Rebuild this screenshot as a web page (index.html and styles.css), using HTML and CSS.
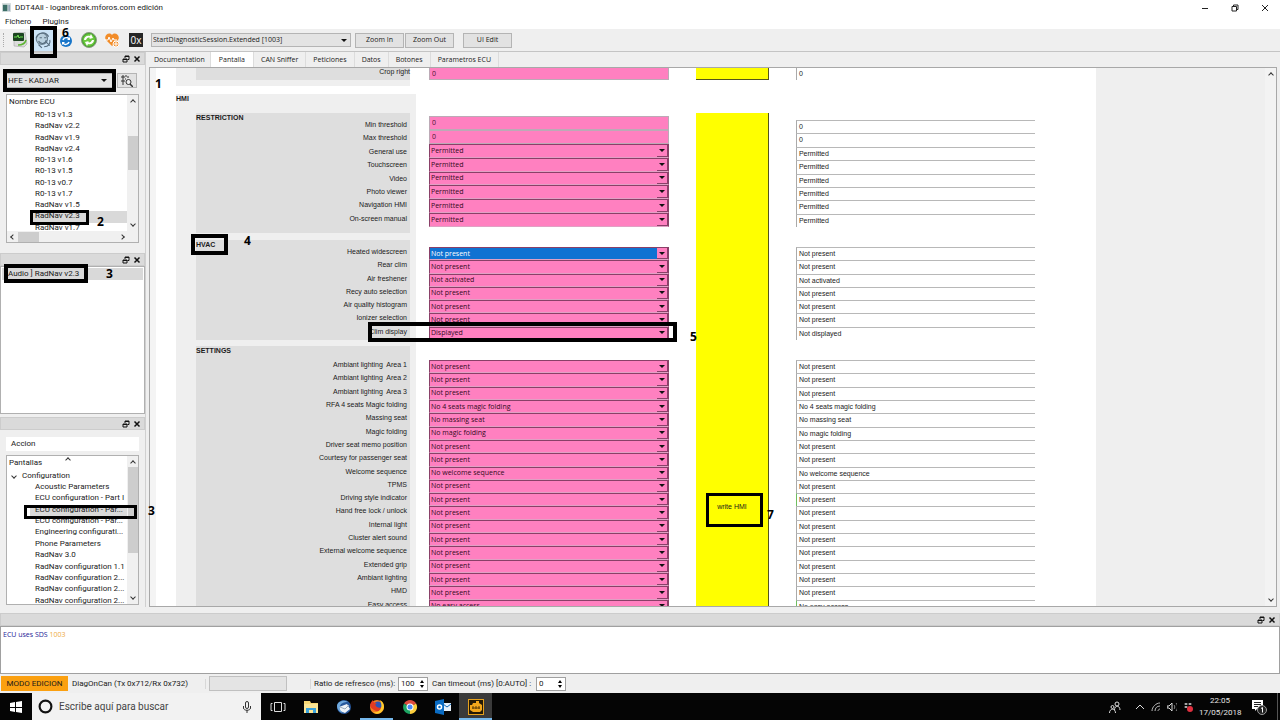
FILE: index.html
```html
<!DOCTYPE html>
<html lang="es">
<head>
    <meta charset="UTF-8">
    <meta name="viewport" content="width=device-width, initial-scale=1.0">
    <title>DDT4All - loganbreak.mforos.com edición</title>
    <link rel="stylesheet" href="styles.css">
</head>
<body>

    <header class="titlebar">
        <svg class="app-icon" viewBox="0 0 10 10"><rect x="0" y="0" width="10" height="10" fill="#d8e0e0"/><rect x="1" y="2" width="5" height="7" fill="#3c6e66"/><rect x="7" y="2" width="2" height="7" fill="#9ab"/></svg>
        <span class="title">DDT4All - loganbreak.mforos.com edición</span>
        <button class="win-btn" aria-label="Minimizar"><svg viewBox="0 0 8 8"><path d="M1 4.500h6" stroke="#222" fill="none"/></svg></button>
        <button class="win-btn" aria-label="Restaurar"><svg viewBox="0 0 8 8"><path d="M1 2.500h4.500v4.500h-4.500zM2.500 2.500v-1.500h4.500v4.500h-1.500" stroke="#222" fill="none"/></svg></button>
        <button class="win-btn" aria-label="Cerrar"><svg viewBox="0 0 8 8"><path d="M1 1l6 6M7 1l-6 6" stroke="#222" fill="none"/></svg></button>
    </header>
    <nav class="menubar">
        <a href="#">Fichero</a>
        <a href="#">Plugins</a>
    </nav>

    <div class="toolbar">
        <span class="grip"></span>
        <button class="tool" aria-label="Conectar"><svg viewBox="0 0 16 16"><path d="M2 1l11-1 2 12-3 3-10-1z" fill="#dcdcdc" stroke="#999" stroke-width=".5"/><rect x="1" y="1" width="11" height="8" rx="1" fill="#1d4420"/><path d="M2 5h3l1-2 1 3 1-1h3" stroke="#6fe052" fill="none"/><path d="M6 13c4 0 7-1 8-5" stroke="#5cb531" stroke-width="1.500" fill="none"/></svg></button>
        <button class="tool active" aria-label="Modo experto"><svg viewBox="0 0 16 16"><circle cx="7" cy="7" r="5" fill="#b9d0df" stroke="#6a8090"/><path d="M2 6c2-5 8-6 11-1M4 9c2 3 6 3 7-1M5 6h2M9 6h2M10 9l4 4M14 8c1 3-1 6-5 6M4 12l3 3" stroke="#566c7e" fill="none"/></svg></button>
        <button class="tool" aria-label="Refrescar ECU"><svg viewBox="0 0 16 16"><circle cx="8" cy="9" r="6" fill="#1976c9"/><path d="M5 8c1-3 5-3 6-1M11 10c-1 3-5 3-6 1" stroke="#fff" stroke-width="1.500" fill="none"/><path d="M9 8h3v-3zM7 10h-3v3z" fill="#fff"/></svg></button>
        <button class="tool" aria-label="Recargar"><svg viewBox="0 0 16 16"><circle cx="8" cy="8" r="7.500" fill="#47a82c" stroke="#8a9a80"/><circle cx="8" cy="8" r="6" fill="#6cc93e"/><path d="M3 8c0-3 3-5 6-4l1-2 2 4-4 1 1-1c-2-1-3 0-4 2zM13 8c0 3-3 5-6 4l-1 2-2-4 4-1-1 1c2 1 3 0 4-2z" fill="#fff"/></svg></button>
        <button class="tool" aria-label="Diagnóstico"><svg viewBox="0 0 16 16"><path d="M8 14l-6-6c-3-4 3-9 6-5 3-4 9 1 6 5z" fill="#f28c28"/><path d="M0 8h4l1-3 2 5 2-4 1 2h3" stroke="#fff" fill="none"/><circle cx="12" cy="12" r="3" fill="#f28c28" stroke="#fff"/><path d="M12 10v4M10 12h4" stroke="#fff"/></svg></button>
        <button class="tool hex" aria-label="Hexadecimal">0x</button>
        <span class="tool-select">
            <select aria-label="Sesión"><option>StartDiagnosticSession.Extended [1003]</option></select>
            <i class="tri"></i>
        </span>
        <button class="push">Zoom In</button>
        <button class="push">Zoom Out</button>
        <span class="sep"></span>
        <button class="push">UI Edit</button>
    </div>

    <main class="workspace">
        <aside class="docks">
            <section class="dock dock-ecu">
                <div class="dock-head"></div>
                <div class="ecu-pick">
                    <span class="tool-select">
                        <select aria-label="Vehículo"><option>HFE - KADJAR</option></select>
                        <i class="tri"></i>
                    </span>
                    <button class="push find" aria-label="Buscar"><svg viewBox="0 0 12 12"><path d="M1 1h2v2h-2zM4 1h2M1 5h2v2h-2zM4 4h1M7 1v2M1 9h2" stroke="#333" fill="none"/><circle cx="7.500" cy="7" r="2.500" stroke="#333" fill="#eee"/><path d="M9 9l3 3" stroke="#333" stroke-width="1.500"/></svg></button>
                </div>
                <div class="tree">
                    <div class="tree-main">
                        <div class="tree-head">Nombre ECU</div>
                        <ul class="rows" id="ecuList"></ul>
                    </div>
                    <div class="vscroll"><i class="chev up"></i><b class="thumb thumb-ecu"></b><i class="chev down"></i></div>
                    <div class="hscroll"><i class="chev left"></i><b class="thumb"></b><i class="chev right"></i></div>
                </div>
            </section>
            <section class="dock dock-found">
                <div class="dock-head"></div>
                <ul class="found"><li>Audio ] RadNav v2.3</li></ul>
            </section>
            <section class="dock dock-screens">
                <div class="dock-head"></div>
                <div class="action">Accion</div>
                <div class="tree">
                    <div class="tree-main">
                        <div class="tree-head sorted">Pantallas<i class="chev up"></i></div>
                        <div class="tree-group"><i class="chev down"></i>Configuration</div>
                        <ul class="rows" id="screenList"></ul>
                    </div>
                    <div class="vscroll"><i class="chev up"></i><b class="thumb thumb-screens"></b><i class="chev down"></i></div>
                </div>
            </section>
        </aside>

        <section class="content">
            <nav class="tabs">
                <button class="first">Documentation</button>
                <button class="current">Pantalla</button>
                <button>CAN Sniffer</button>
                <button>Peticiones</button>
                <button>Datos</button>
                <button>Botones</button>
                <button>Parametros ECU</button>
            </nav>
            <div class="pane">
                <div class="scene">
                    <div class="form-grid crop">
                        <div class="group"><div class="panel"><label for="cropRight">Crop right</label></div></div>
                        <input class="num" id="cropRight" value="0">
                        <button class="write" aria-label="write crop"></button>
                        <output class="value">0</output>
                    </div>
                    <div class="form-grid hmi">
                        <div class="group">
                            <h2>HMI</h2>
                            <div id="labels"></div>
                        </div>
                        <div class="inputs" id="inputs"></div>
                        <button class="write">write HMI</button>
                        <div class="values" id="values"></div>
                    </div>
                </div>
                <div class="backdrop"></div>
                <div class="vscroll plain"><i class="chev up"></i><i class="chev down"></i></div>
            </div>
        </section>
    </main>

    <section class="log">
        <div class="dock-head"></div>
        <p>ECU uses SDS <span>1003</span></p>
    </section>

    <footer class="status">
        <span class="mode">MODO EDICION</span>
        <span class="link-state">DiagOnCan (Tx 0x712/Rx 0x732)</span>
        <span class="progress"></span>
        <label class="refresh" for="refresh">Ratio de refresco (ms):</label>
        <span class="spin"><input id="refresh" value="100"><svg viewBox="0 0 6 10"><path d="M1 4l2-3 2 3zM1 6l2 3 2-3z"/></svg></span>
        <label class="timeout" for="timeout">Can timeout (ms) [0:AUTO] :</label>
        <span class="spin"><input id="timeout" value="0"><svg viewBox="0 0 6 10"><path d="M1 4l2-3 2 3zM1 6l2 3 2-3z"/></svg></span>
    </footer>

    <div class="taskbar">
        <button class="start" aria-label="Inicio"><svg viewBox="0 0 12 12"><path d="M0 2l5-1v5h-5zM6 1l6-1v6h-6zM0 7h5v4l-5-1zM6 7h6v5l-6-1z" fill="#fff"/></svg></button>
        <label class="search">
            <svg class="cortana" viewBox="0 0 14 14"><circle cx="7" cy="7" r="5.500" fill="none" stroke="#111" stroke-width="2"/></svg>
            <input placeholder="Escribe aquí para buscar" aria-label="Buscar">
            <svg class="mic" viewBox="0 0 8 12"><rect x="2.500" y="0.500" width="3" height="7" rx="1.500" fill="none" stroke="#333"/><path d="M.5 5v2c0 3 7 3 7 0v-2M4 9v3" stroke="#333" fill="none"/></svg>
        </label>
        <button class="task" aria-label="Vista de tareas"><svg viewBox="0 0 16 16"><path d="M4.500 3.500h7v9h-7zM2.500 4.500h-1.500v7h1.500M13.500 4.500h1.500v7h-1.500" stroke="#ddd" fill="none"/></svg></button>
        <button class="task" aria-label="Explorador"><svg viewBox="0 0 16 16"><path d="M1 2h6l1 2h7v10h-14z" fill="#f7d774"/><path d="M1 5h14v9h-14z" fill="#fbe596"/><path d="M3 14v-5h10v5h-3v-3h-4v3z" fill="#3ba3dc"/></svg></button>
        <button class="task" aria-label="Thunderbird"><svg viewBox="0 0 16 16"><circle cx="8" cy="8" r="7" fill="#27579b"/><path d="M3 8l8-3 3 5-5 4-5-2z" fill="#eef3f8"/><path d="M1 7c0-4 6-7 11-4-4 0-7 1-8 4-1 3 1 5 3 7-4-1-6-4-6-7z" fill="#6ea8dc"/><path d="M4 8l5 2 4-4" stroke="#9ab" fill="none"/></svg></button>
        <button class="task open" aria-label="Firefox"><svg viewBox="0 0 16 16"><circle cx="8" cy="8" r="7" fill="#f4801f"/><circle cx="9" cy="7" r="4.500" fill="#2c56b8"/><path d="M1 6c1-3 2-4 3-5 0 2 1 3 4 3-2 1-2 2-1 3 1 2 4 2 6 1-1 4-5 5-8 3-2-1-4-3-4-5z" fill="#e23b22"/><path d="M11 1c4 2 5 7 3 10-2 4-7 5-10 2 4 1 7-1 8-4 1-3 0-5-1-8z" fill="#ffca2c"/></svg></button>
        <button class="task" aria-label="Chrome"><svg viewBox="0 0 16 16"><path d="M8 8L2 4.500a7 7 0 0 1 12.100 0z" fill="#dd4b3e"/><path d="M8 8l6.100-3.500a7 7 0 0 1-6.100 10.500z" fill="#fbce3c"/><path d="M8 8l0 7a7 7 0 0 1-6-10.500z" fill="#1da462"/><circle cx="8" cy="8" r="3.500" fill="#fff"/><circle cx="8" cy="8" r="2.500" fill="#4a8af4"/></svg></button>
        <button class="task" aria-label="Outlook"><svg viewBox="0 0 16 16"><path d="M8 4h8v8h-8z" fill="#e6f0fa"/><path d="M8 5l4 3 4-3" stroke="#0a64b4" fill="none"/><path d="M0 2l9-2v16l-9-2z" fill="#0a6cc4"/><circle cx="4.500" cy="8" r="2" fill="none" stroke="#fff" stroke-width="1.500"/></svg></button>
        <button class="task open focus" aria-label="DDT4All"><svg viewBox="0 0 16 16"><rect x=".5" y=".5" width="15" height="15" fill="#241a06" stroke="#e6a11c"/><path d="M2 6h2l1-2h3v-2h3v2l3 2v5l-2 2h-7l-3-2z" fill="#f2a71c"/><path d="M4 9h8M5 7v3M8 7v3M11 7v3" stroke="#5a3b05" fill="none"/></svg></button>
        <div class="tray">
            <svg class="people" viewBox="0 0 12 12"><circle cx="8" cy="3" r="2" fill="none" stroke="#ddd"/><circle cx="3.500" cy="6" r="1.500" fill="none" stroke="#ddd"/><path d="M5.500 9c0-5 5.500-5 5.500 0M.5 12c0-5 6-5 6 0" stroke="#ddd" fill="none"/></svg>
            <svg class="tray-icon" viewBox="0 0 10 10"><path d="M1 7l4-4 4 4" stroke="#ddd" fill="none"/></svg>
            <svg class="tray-icon" viewBox="0 0 10 10"><path d="M1 9c0-4 4-8 8-8M4 9c0-3 2-5 5-5M7 9c0-1 1-2 2-2" stroke="#bbb" fill="none"/></svg>
            <svg class="tray-icon" viewBox="0 0 10 10"><path d="M0 4h2l3-3v8l-3-3h-2z" fill="none" stroke="#ddd"/><path d="M7 3c1 1 1 3 0 4M9 1c2 2 2 6 0 8" stroke="#888" fill="none"/></svg>
            <svg class="tray-icon" viewBox="0 0 10 10"><path d="M1 2l2-1 2 1-2 1zM5 2l2-1 2 1-2 1zM1 5l2-1 2 1-2 1z" fill="#ddd"/><circle cx="7" cy="7" r="3" fill="#e0303f"/></svg>
            <time class="clock">22:05<br>17/05/2018</time>
            <svg class="notice" viewBox="0 0 16 16"><path d="M1 1h11v9h-6l-2 2v-2h-3z" fill="#fff"/><path d="M3 3.500h7M3 5.500h7M3 7.500h4" stroke="#222"/><circle cx="11" cy="11" r="4.500" fill="#222" stroke="#999"/><path d="M10 9.500l1.500-1v5" stroke="#fff" fill="none"/></svg>
            <span class="peek"></span>
        </div>
    </div>

    <!-- step-by-step marks -->
    <div class="marks">
        <span class="box box-expert"></span>
        <span class="box box-vehicle"></span>
        <span class="box box-ecu"></span>
        <span class="box box-found"></span>
        <span class="box box-screen"></span>
        <span class="box box-hvac"></span>
        <span class="box box-clim"></span>
        <span class="box box-write"></span>
        <b class="step step-1">1</b>
        <b class="step step-2">2</b>
        <b class="step step-3">3</b>
        <b class="step step-3b">3</b>
        <b class="step step-4">4</b>
        <b class="step step-5">5</b>
        <b class="step step-6">6</b>
        <b class="step step-7">7</b>
    </div>

    <script>
        var ecus = ['R0-13 v1.3', 'RadNav v2.2', 'RadNav v1.9', 'RadNav v2.4', 'R0-13 v1.6', 'R0-13 v1.5',
            'R0-13 v0.7', 'R0-13 v1.7', 'RadNav v1.5', 'RadNav v2.3', 'RadNav v1.7'];
        var screens = ['Acoustic Parameters', 'ECU configuration - Part I', 'ECU configuration - Par...',
            'ECU configuration - Par...', 'Engineering configurati...', 'Phone Parameters', 'RadNav 3.0',
            'RadNav configuration 1.1', 'RadNav configuration 2...', 'RadNav configuration 2...', 'RadNav configuration 2...'];

        // label, value to write, value read (when it differs)
        var groups = [
            { name: 'RESTRICTION', id: 'restriction', rows: [
                ['Min threshold', '0'], ['Max threshold', '0'], ['General use', 'Permitted'], ['Touchscreen', 'Permitted'],
                ['Video', 'Permitted'], ['Photo viewer', 'Permitted'], ['Navigation HMI', 'Permitted'], ['On-screen manual', 'Permitted']
            ] },
            { name: 'HVAC', id: 'hvac', rows: [
                ['Heated widescreen', 'Not present'], ['Rear clim', 'Not present'], ['Air freshener', 'Not activated'],
                ['Recy auto selection', 'Not present'], ['Air quality histogram', 'Not present'],
                ['Ionizer selection', 'Not present'], ['Clim display', 'Displayed', 'Not displayed']
            ] },
            { name: 'SETTINGS', id: 'settings', rows: [
                ['Ambiant lighting  Area 1', 'Not present'], ['Ambiant lighting  Area 2', 'Not present'],
                ['Ambiant lighting  Area 3', 'Not present'], ['RFA 4 seats Magic folding', 'No 4 seats magic folding'],
                ['Massing seat', 'No massing seat'], ['Magic folding', 'No magic folding'],
                ['Driver seat memo position', 'Not present'], ['Courtesy for passenger seat', 'Not present'],
                ['Welcome sequence', 'No welcome sequence'], ['TPMS', 'Not present'],
                ['Driving style indicator', 'Not present'], ['Hand free lock / unlock', 'Not present'],
                ['Internal light', 'Not present'], ['Cluster alert sound', 'Not present'],
                ['External welcome sequence', 'Not present'], ['Extended grip', 'Not present'],
                ['Ambiant lighting', 'Not present'], ['HMD', 'Not present'], ['Easy access', 'No easy access']
            ] }
        ];

        function fillList(id, items, selected) {
            document.getElementById(id).innerHTML = items.map(function (text, i) {
                return '<li' + (i === selected ? ' class="selected"' : '') + '>' + text + '</li>';
            }).join('');
        }

        function fillForm() {
            var labels = '', inputs = '', values = '';
            groups.forEach(function (g) {
                labels += '<div class="panel ' + g.id + '"><h3>' + g.name + '</h3><div class="lines">';
                inputs += '<div class="lines ' + g.id + '">';
                values += '<div class="lines ' + g.id + '">';
                g.rows.forEach(function (row, i) {
                    var id = g.id + i;
                    labels += '<label for="' + id + '">' + row[0] + '</label>';
                    if (row[1] === '0') {
                        inputs += '<input class="num" id="' + id + '" value="0">';
                    } else {
                        inputs += '<span class="combo"><select id="' + id + '"><option>' + row[1] + '</option></select><span class="drop"><i class="tri"></i></span></span>';
                    }
                    values += '<output class="value" for="' + id + '">' + (row[2] || row[1]) + '</output>';
                });
                labels += '</div></div>';
                inputs += '</div>';
                values += '</div>';
            });
            document.getElementById('labels').innerHTML = labels;
            document.getElementById('inputs').innerHTML = inputs;
            document.getElementById('values').innerHTML = values;
            document.getElementById('hvac0').className = 'focused';
        }

        // float / close buttons of every dock
        document.querySelectorAll('.dock-head').forEach(function (head) {
            head.innerHTML = '<button aria-label="Flotar"><svg viewBox="0 0 8 8"><path d="M1 4h4v3h-4zM3 3v-2h4v3.500h-1.500M1 4.500h4M3 1.500h4" stroke="#111" fill="none"/></svg></button>' +
                '<button aria-label="Cerrar"><svg viewBox="0 0 8 8"><path d="M1.500 1.500l5 5M6.500 1.500l-5 5" stroke="#111" stroke-width="1.500" fill="none"/></svg></button>';
        });

        fillList('ecuList', ecus, 9);
        fillList('screenList', screens, 2);
        fillForm();
    </script>
</body>
</html>
```
FILE: styles.css
```css
* {
    box-sizing: border-box;
}
body {
    margin: 0;
    height: 100vh;
    display: flex;
    flex-direction: column;
    overflow: hidden;
    position: relative;
    background-color: #efefef;
    color: #1a1a1a;
    font-family: "Open Sans", "Noto Sans", sans-serif;
    font-size: 7px;
    line-height: 10px;
}
button, input, select {
    margin: 0;
    padding: 0;
    border: 0;
    border-radius: 0;
    background: none;
    color: inherit;
    font: inherit;
    appearance: none;
    outline: none;
    min-width: 0;
}
ul, h2, h3, p {
    margin: 0;
    padding: 0;
    list-style: none;
    font-size: inherit;
}
svg {
    display: block;
}
.titlebar, .menubar, .docks, .status, .taskbar {
    font-family: Roboto, "Open Sans", sans-serif;
    font-size: 8px;
}

/* window top */
.titlebar {
    height: 15px;
    display: flex;
    align-items: center;
    background-color: white;
    padding-left: 2px;
}
.app-icon {
    width: 9px;
    height: 9px;
    margin-right: 4px;
}
.title {
    flex: 1;
}
.win-btn {
    width: 30px;
    display: flex;
    justify-content: center;
}
.win-btn svg {
    width: 8px;
    height: 8px;
}
.menubar {
    height: 14px;
    display: flex;
    align-items: center;
    gap: 11px;
    padding-left: 5px;
    background-color: white;
}
.menubar a {
    color: inherit;
    text-decoration: none;
}
.toolbar {
    height: 23px;
    display: flex;
    align-items: center;
    border-bottom: 1px solid #c4c4c4;
    padding-left: 3px;
}
.grip {
    width: 2px;
    height: 14px;
    margin-right: 3px;
    border-left: 1px dotted #aaa;
}
.tool {
    width: 23px;
    height: 21px;
    display: flex;
    align-items: center;
    justify-content: center;
}
.tool svg {
    width: 16px;
    height: 16px;
}
.tool.active {
    background-color: #cce4f7;
}
.tool.active svg {
    width: 18px;
    height: 18px;
}
.tool.hex {
    width: 14px;
    height: 14px;
    margin: 0 8px 0 6px;
    background-color: #262626;
    color: white;
    font-size: 10px;
    line-height: 14px;
}
.tool-select {
    display: flex;
    align-items: center;
    width: 200px;
    height: 14px;
    padding: 0 3px 0 1px;
    margin-right: 4px;
    border: 1px solid #b4b4b4;
    background-color: #e3e3e3;
}
.tool-select select {
    flex: 1;
}
.tri {
    width: 0;
    height: 0;
    border: 3px solid transparent;
    border-top-color: #111;
    border-bottom: 0;
}
.push {
    width: 49px;
    height: 15px;
    margin-right: 1px;
    border: 1px solid #b4b4b4;
    background-color: #e2e2e2;
}
.sep {
    width: 8px;
}

/* docks */
.workspace {
    flex: 1;
    min-height: 0;
    display: flex;
    gap: 3px;
    padding-bottom: 6px;
}
.docks {
    width: 146px;
    display: flex;
    flex-direction: column;
    border-right: 1px solid #d0d0d0;
}
.dock {
    display: flex;
    flex-direction: column;
    min-height: 0;
}
.dock-head {
    flex: none;
    height: 13px;
    display: flex;
    align-items: center;
    justify-content: flex-end;
    gap: 2px;
    padding-right: 2px;
    background-color: #dadada;
    border: 1px solid #cccccc;
}
.dock-head button {
    width: 9px;
}
.dock-head svg {
    width: 8px;
    height: 8px;
}
.dock-ecu {
    height: 201px;
    padding-bottom: 10px;
}
.dock-found {
    height: 164px;
    padding-bottom: 3px;
}
.dock-screens {
    flex: 1;
    padding-bottom: 2px;
}
.ecu-pick {
    display: flex;
    padding: 8px 6px 6px 6px;
}
.ecu-pick .tool-select {
    width: 107px;
    height: 15px;
    padding: 0 5px 0 1px;
}
.push.find {
    width: 20px;
    display: flex;
    align-items: center;
    justify-content: center;
}
.find svg {
    width: 12px;
    height: 12px;
}
.tree {
    flex: 1;
    min-height: 0;
    margin: 0 6px;
    display: grid;
    grid-template-columns: 1fr 11px;
    grid-template-rows: 1fr auto;
    background-color: white;
    border: 1px solid #b0b0b0;
}
.tree-main {
    display: flex;
    flex-direction: column;
    min-height: 0;
    overflow: hidden;
}
.tree-head {
    padding: 2px 2px 3px 2px;
}
.sorted {
    display: flex;
    padding-bottom: 1px;
}
.sorted .chev {
    margin: 0 0 0 24px;
}
.tree-group {
    display: flex;
    align-items: center;
    gap: 4px;
    padding: 2px 3px 1px 3px;
}
/* the last row runs under the edge of the list */
.rows {
    flex: 1;
    min-height: 0;
    display: flex;
    flex-direction: column;
    margin-bottom: -3px;
    padding-left: 23px;
}
.rows li {
    flex: 1;
    min-height: 0;
    padding-left: 5px;
    white-space: nowrap;
}
.rows .selected {
    background-color: #d9d9d9;
}
.vscroll {
    display: flex;
    flex-direction: column;
    align-items: center;
    background-color: #f0f0f0;
    padding: 3px 0;
}
.hscroll {
    grid-column: 1 / 3;
    display: flex;
    align-items: center;
    height: 11px;
    padding: 0 12px 0 2px;
    background-color: #f0f0f0;
}
.hscroll .thumb {
    width: 21px;
    height: 10px;
    margin: 0 auto 0 1px;
}
.thumb {
    width: 10px;
    background-color: #cdcdcd;
}
.thumb-ecu {
    height: 34px;
    margin-top: 30px;
}
.thumb-screens {
    height: 86px;
}
.chev {
    flex: none;
    width: 4px;
    height: 4px;
    margin: 2px;
    border-top: 1px solid #333;
    border-left: 1px solid #333;
}
.chev.up {
    transform: rotate(45deg);
}
.chev.down {
    transform: rotate(225deg);
}
.chev.left {
    transform: rotate(-45deg);
}
.chev.right {
    transform: rotate(135deg);
}
.vscroll .chev.down {
    margin-top: auto;
}
.found {
    flex: 1;
    padding: 1px;
    background-color: white;
    border: 1px solid #b0b0b0;
}
.found li {
    height: 12px;
    padding-left: 6px;
    line-height: 12px;
    background-color: #d9d9d9;
}
.action {
    margin: 7px 6px 4px 6px;
    padding: 2px 5px;
    background-color: white;
}

/* tabs and form */
.content {
    flex: 1;
    min-width: 0;
    display: flex;
    flex-direction: column;
    padding-right: 3px;
}
.tabs {
    height: 15px;
    display: flex;
}
.tabs button {
    padding: 0 7px;
    border-right: 1px solid #dcdcdc;
}
.tabs .first {
    padding: 0 5px;
}
.tabs .current {
    padding: 0 8px;
    background-color: white;
}
.pane {
    flex: 1;
    min-height: 0;
    display: flex;
    overflow: hidden;
    border: 1px solid #a8a8a8;
}
.scene {
    flex: 945 1 0;
    display: flex;
    flex-direction: column;
    gap: 8px;
    background-color: white;
    border-left: 6px solid #f4f4f4;
}
.backdrop {
    flex: 170 1 0;
}
.vscroll.plain {
    width: 11px;
    background-color: #f3f3f3;
}
.form-grid {
    flex: none;
    display: grid;
    grid-template-columns: 240fr 226fr 73fr 239fr;
    column-gap: 27px;
    padding: 0 61px 0 20px;
    font-family: "Liberation Sans", Arial, sans-serif;
}
.form-grid .inputs, .crop .num {
    margin-left: -14px;
    font-family: "Open Sans", "Noto Sans", sans-serif;
}
.crop {
    height: 18px;
}
.group {
    background-color: #efefef;
}
.crop .group {
    margin-right: 6px;
}
h2 {
    height: 19px;
    font-weight: bold;
}
.panel {
    margin: 0 6px 0 20px;
    padding-right: 3px;
    background-color: #dedede;
}
.crop .panel {
    height: 12px;
    margin-right: 0;
    padding: 0;
}
h3 {
    height: 5px;
    white-space: nowrap;
}
.lines {
    display: flex;
    flex-direction: column;
}
.lines > * {
    flex: 1;
    min-height: 0;
}
.panel.restriction {
    height: 120px;
    margin-bottom: 7px;
}
.panel.hvac {
    height: 100px;
    margin-bottom: 6px;
}
.panel label {
    display: block;
    text-align: right;
    line-height: 13px;
    white-space: pre;
}
.crop .panel label {
    line-height: 8px;
}
.restriction .lines {
    height: 107px;
}
.hvac .lines {
    height: 93px;
}
.settings .lines, .lines.settings {
    height: 253px;
}
.settings .lines {
    padding-top: 7px;
    height: 260px;
}
.inputs {
    padding-top: 22px;
}
.values {
    padding-top: 26px;
}
.inputs .restriction {
    height: 111px;
}
.values .restriction {
    height: 107px;
}
.lines.restriction {
    margin-bottom: 20px;
}
.lines.hvac {
    height: 93px;
    margin-bottom: 20px;
}
.num {
    width: 100%;
    padding-left: 2px;
    background-color: #ff80c0;
    border: 1px solid #bcaab6;
    color: #501030;
}
.crop .num {
    width: auto;
    height: 12px;
    border-top: 0;
}
.combo {
    display: flex;
    align-items: center;
    background-color: #ff80c0;
    border: 1px solid #8a4068;
    border-bottom-color: #e0a0c4;
    color: #330a20;
}
.combo select {
    flex: 1;
    height: 100%;
    padding-left: 1px;
    line-height: 10px;
}
.combo .focused {
    background-color: #0f72d2;
    color: white;
}
.drop {
    width: 11px;
    height: 100%;
    display: flex;
    align-items: center;
    justify-content: center;
    border-right: 1px solid #8a4068;
    border-bottom: 1px solid #8a4068;
}
.write {
    background-color: #ffff00;
    border-right: 1px solid #55551a;
    border-bottom: 1px solid #55551a;
}
.crop .write {
    height: 12px;
}
.hmi .write {
    height: 788px;
    margin-top: 19px;
}
.value {
    display: block;
    padding-left: 2px;
    border-left: 1px solid #aaa;
    border-top: 1px solid #b8b8b8;
    line-height: 11px;
}
.crop .value {
    height: 12px;
    border-top: 0;
}
.settings .value:nth-child(11), .settings .value:nth-child(19) {
    border-left-color: #6fbf5f;
}

/* log, status bar */
.log {
    display: flex;
    flex-direction: column;
}
.log p {
    height: 48px;
    padding: 3px 2px;
    background-color: white;
    border: 1px solid #a0a0a0;
    color: #1c1c96;
}
.log span {
    color: #eeaa44;
}
.status {
    height: 19px;
    display: flex;
    align-items: center;
    padding-left: 1px;
}
.mode {
    width: 67px;
    padding: 3px 0 2px 0;
    text-align: center;
    background-color: #fba010;
}
.link-state {
    width: 138px;
    margin-right: 3px;
    padding-left: 4px;
    border-right: 1px solid #d8d8d8;
}
.progress {
    width: 78px;
    height: 15px;
    background-color: #e4e4e4;
    border: 1px solid #c0c0c0;
}
.refresh {
    width: 88px;
    margin-left: 23px;
    padding-left: 3px;
    border-left: 1px solid #d8d8d8;
}
.timeout {
    width: 104px;
}
.spin {
    width: 30px;
    height: 14px;
    display: flex;
    align-items: center;
    margin-right: 4px;
    padding: 0 2px;
    background-color: white;
    border: 1px solid #a0a0a0;
}
.spin input {
    flex: 1;
    width: 0;
}
.spin svg {
    width: 6px;
    height: 10px;
}

/* taskbar */
.taskbar {
    height: 27px;
    display: flex;
    background-color: #050505;
    color: #e6e6e6;
}
.start {
    width: 32px;
    display: flex;
    align-items: center;
    justify-content: center;
    padding-right: 1px;
}
.start svg {
    width: 12px;
    height: 12px;
}
.search {
    width: 229px;
    display: flex;
    align-items: center;
    gap: 6px;
    padding: 0 10px 0 6px;
    background-color: #f2f2f2;
    color: #444;
    font-size: 10px;
}
.search input {
    flex: 1;
}
.search input::placeholder {
    color: #444;
}
.cortana {
    width: 15px;
    height: 15px;
}
.mic {
    width: 8px;
    height: 12px;
}
.task {
    width: 33px;
    display: flex;
    align-items: center;
    justify-content: center;
    border-top: 2px solid transparent;
    border-bottom: 2px solid transparent;
}
.task svg {
    width: 16px;
    height: 16px;
}
.task.open {
    border-bottom-color: #76b9ed;
}
.task.focus {
    background-color: #3a3a3a;
}
.tray {
    margin-left: auto;
    display: flex;
    align-items: center;
    gap: 6px;
}
.people {
    width: 12px;
    height: 12px;
    margin-right: 8px;
}
.tray-icon {
    width: 10px;
    height: 10px;
}
.clock {
    width: 42px;
    text-align: center;
    line-height: 12px;
}
.notice {
    width: 16px;
    height: 16px;
    margin: 0 4px;
}
.peek {
    height: 27px;
    width: 3px;
    border-left: 1px solid #555;
}

/* numbered marks drawn over the window */
.box, .step {
    position: absolute;
}
.box {
    border: 4px solid black;
}
.step {
    color: black;
    font-size: 12px;
    line-height: 12px;
}
.box-expert { left: 30px; top: 26px; width: 27px; height: 32px; }
.box-vehicle { left: 3px; top: 69px; width: 113px; height: 23px; }
.box-ecu { left: 30px; top: 210px; width: 59px; height: 15px; border-width: 3px; }
.box-found { left: 4px; top: 264px; width: 84px; height: 19px; }
.box-screen { left: 24px; top: 505px; width: 113px; height: 14px; border-width: 3px; }
.box-hvac { left: 191px; top: 234px; width: 37px; height: 21px; }
.box-clim { left: 368px; top: 322px; width: 309px; height: 20px; }
.box-write { left: 706px; top: 493px; width: 57px; height: 34px; border-width: 3px; }
.step-1 { left: 155px; top: 78px; }
.step-2 { left: 97px; top: 216px; }
.step-3 { left: 106px; top: 268px; }
.step-3b { left: 148px; top: 505px; }
.step-4 { left: 244px; top: 235px; }
.step-5 { left: 690px; top: 331px; }
.step-6 { left: 62px; top: 27px; }
.step-7 { left: 767px; top: 509px; }
```
